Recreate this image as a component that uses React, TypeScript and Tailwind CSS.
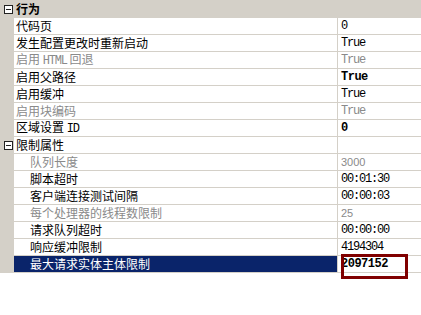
import React from "react";

type Row = {
  label: React.ReactNode;
  value?: string;
  dim?: boolean;
  bold?: boolean;
  font?: "mono" | "sans";
  selected?: boolean;
};

const CJK = "font-['Noto_Sans_CJK_SC','Noto_Sans',sans-serif]";

// latin bits inside chinese labels use a narrow mono like the bitmap font
const Latin = ({ children }: { children: string }) => (
  <span className="font-['Liberation_Mono',monospace] text-[12px] tracking-[-1.2px]">{children}</span>
);

const behaviour: Row[] = [
  { label: "代码页", value: "0" },
  { label: "发生配置更改时重新启动", value: "True" },
  {
    label: (
      <>
        启用 <Latin>HTML</Latin> 回退
      </>
    ),
    value: "True",
    dim: true,
  },
  { label: "启用父路径", value: "True", bold: true },
  { label: "启用缓冲", value: "True" },
  { label: "启用块编码", value: "True", dim: true },
  {
    label: (
      <>
        区域设置 <Latin>ID</Latin>
      </>
    ),
    value: "0",
    bold: true,
  },
];

const limits: Row[] = [
  { label: "队列长度", value: "3000", dim: true, font: "sans" },
  { label: "脚本超时", value: "00:01:30" },
  { label: "客户端连接测试间隔", value: "00:00:03" },
  { label: "每个处理器的线程数限制", value: "25", dim: true, font: "sans" },
  { label: "请求队列超时", value: "00:00:00" },
  { label: "响应缓冲限制", value: "4194304" },
  { label: "最大请求实体主体限制", value: "2097152", bold: true, selected: true },
];

function Toggle() {
  return (
    <svg width="9" height="9" viewBox="0 0 9 9" className="shrink-0">
      <rect x="0.5" y="0.5" width="8" height="8" fill="#ffffff" stroke="#222222" />
      <line x1="2" y1="4.5" x2="7" y2="4.5" stroke="#222222" />
    </svg>
  );
}

function Category({ title, heading }: { title: string; heading?: boolean }) {
  if (heading) {
    return (
      <div className="flex h-[18px] items-center bg-[#d4d0c8]">
        <div className="flex w-[14px] justify-center pl-[2px]">
          <Toggle />
        </div>
        <span className={`pl-[2px] text-[12px] font-bold text-black ${CJK}`}>{title}</span>
      </div>
    );
  }
  return (
    <div className="flex h-[17px]">
      <div className="flex w-[14px] items-center justify-center bg-[#d4d0c8] pl-[2px]">
        <Toggle />
      </div>
      <div className="flex flex-1 items-center border-b border-[#d4d0c8] bg-white pl-[2px]">
        <span className={`text-[12px] text-black ${CJK}`}>{title}</span>
      </div>
      <div className="w-[84px] border-b border-l border-[#d4d0c8] bg-white" />
    </div>
  );
}

function Item({ row, indent }: { row: Row; indent: string }) {
  const valueFont =
    row.font === "sans"
      ? "font-['Liberation_Sans',Arial,sans-serif] text-[11px]"
      : row.bold
        ? "font-['Liberation_Mono',monospace] text-[12px] font-bold tracking-[-0.5px]"
        : "font-['Liberation_Mono',monospace] text-[12px] tracking-[-1.2px]";
  return (
    <div className="flex h-[17px]">
      <div className="w-[14px] bg-[#d4d0c8]" />
      <div
        className={`flex flex-1 items-center border-b border-[#d4d0c8] ${indent} ${
          row.selected ? "bg-[#0a246a] text-white" : row.dim ? "bg-white text-[#8a8a8a]" : "bg-white text-black"
        }`}
      >
        <span className={`whitespace-pre text-[12px] leading-none ${CJK}`}>{row.label}</span>
      </div>
      <div
        className={`flex w-[84px] items-center border-b border-l border-[#d4d0c8] bg-white pl-[3px] leading-none ${
          row.dim ? "text-[#8a8a8a]" : "text-black"
        } ${valueFont}`}
      >
        {row.value}
      </div>
    </div>
  );
}

export default function App() {
  return (
    <div className="relative h-[315px] w-[421px] overflow-hidden bg-white">
      <Category title="行为" heading />
      {behaviour.map((r, i) => (
        <Item key={i} row={r} indent="pl-[2px]" />
      ))}
      <Category title="限制属性" />
      {limits.map((r, i) => (
        <Item key={i} row={r} indent="pl-[16px]" />
      ))}
      {/* annotation box round the edited value */}
      <div className="absolute left-[341px] top-[254px] h-[25px] w-[67px] border-[3px] border-[#800000]" />
    </div>
  );
}
